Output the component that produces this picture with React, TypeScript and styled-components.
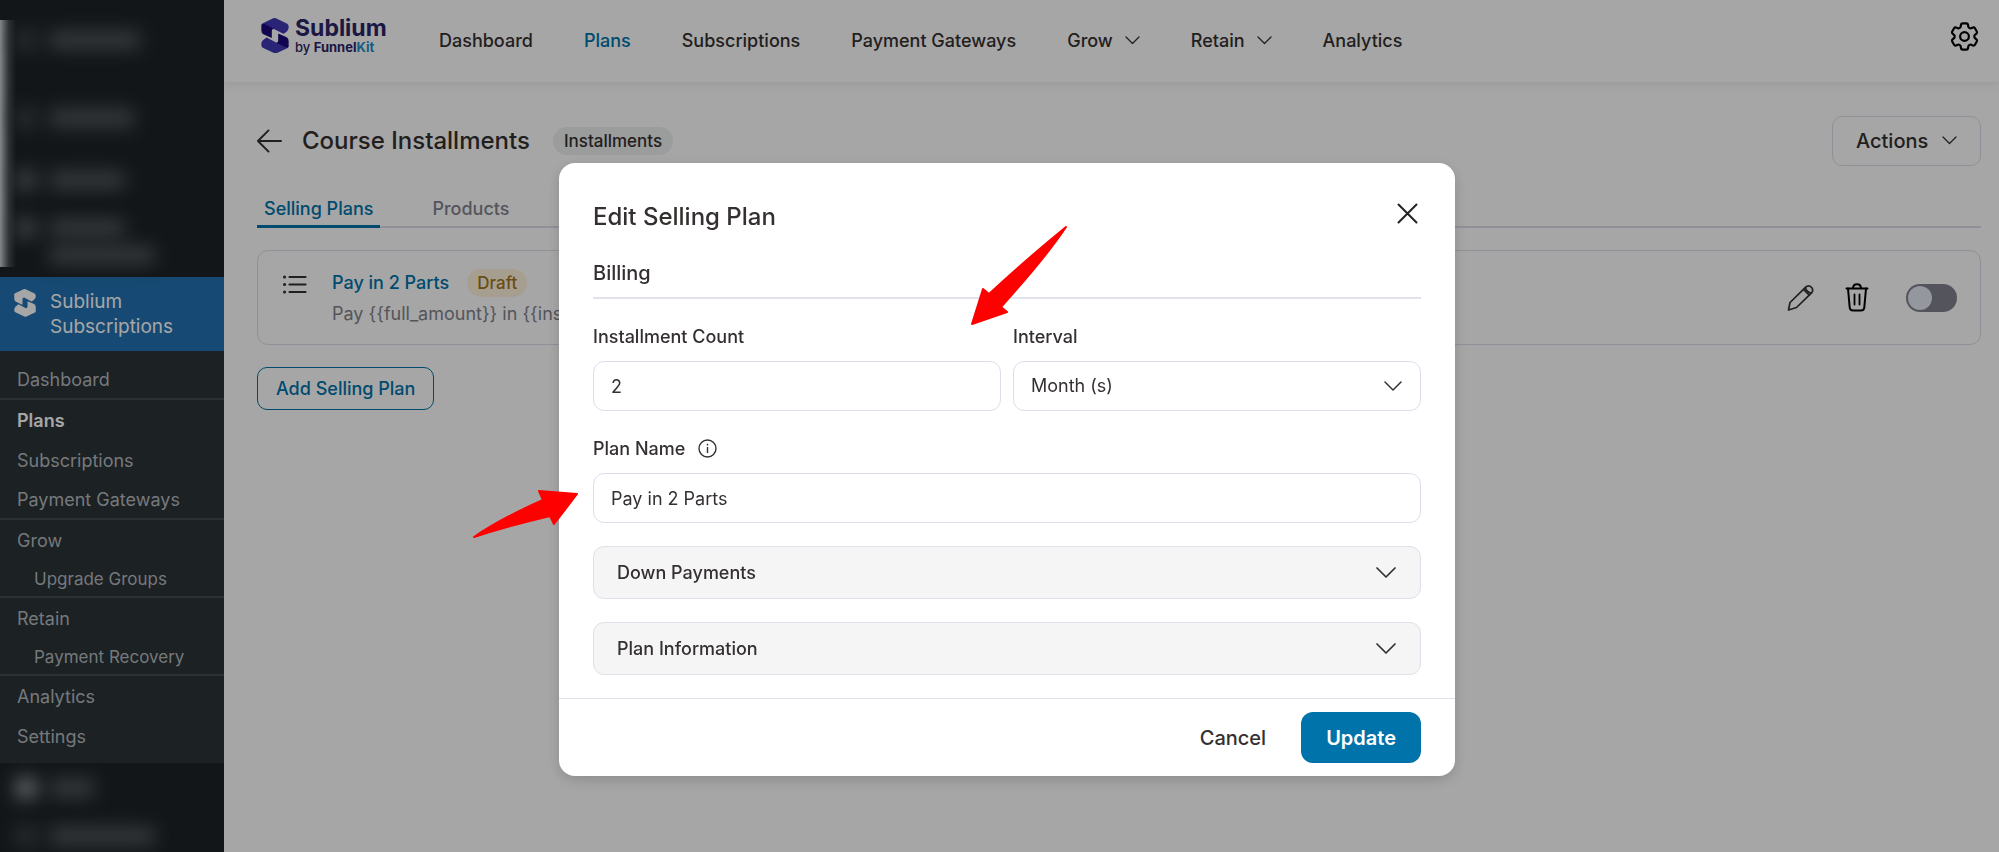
import React from "react";
import styled, { createGlobalStyle } from "styled-components";
import { HiOutlineCog6Tooth } from "react-icons/hi2";

const GlobalStyle = createGlobalStyle`
  *, *::before, *::after { box-sizing: border-box; }
  body {
    margin: 0;
    font-family: Inter, "Open Sans", sans-serif;
    font-size: 18px;
    line-height: 24px;
    color: #353030;
    background: #fff;
  }
  button, input, select { font: inherit; color: inherit; }
  button { cursor: pointer; }
  h1, h2, h3, p { margin: 0; }
  a { text-decoration: none; color: inherit; }
`;

/* ---------- page shell ---------- */

const Page = styled.div`
  display: flex;
  min-height: 100vh;
`;

const Sidebar = styled.aside`
  flex: 0 0 224px;
  background: #1d2327;
  overflow: hidden;
`;

const Main = styled.div`
  flex: 1;
  min-width: 0;
`;

/* ---------- sidebar ---------- */

const HiddenTop = styled.div`
  height: 277px;
  padding: 20px 0 10px;
`;

const HiddenTopInner = styled.div`
  height: 247px;
  padding-top: 11px;
  background: linear-gradient(to right, #c9d1d6 0, #8b9195 4px, #454b50 9px, #1d2327 16px);
`;

const HiddenRow = styled.div<{ $space: number }>`
  display: flex;
  align-items: center;
  gap: 14px;
  height: 18px;
  margin-bottom: ${(p) => p.$space}px;
  padding-left: 16px;
  filter: blur(9px);
`;

const HiddenIcon = styled.span<{ $tone?: string }>`
  width: 20px;
  height: 20px;
  background: ${(p) => p.$tone || "#40464a"};
`;

const HiddenText = styled.span<{ $width: number }>`
  width: ${(p) => p.$width}px;
  height: 18px;
  background: #53595d;
`;

const HiddenBottom = styled.div`
  padding-top: 16px;
`;

const ActiveMenu = styled.a`
  display: flex;
  gap: 14px;
  padding: 12px 14px 11px;
  height: 74px;
  background: #2271b1;
  color: #fff;
  font-size: 19px;
  line-height: 25px;
`;

const Submenu = styled.nav`
  display: flex;
  flex-direction: column;
  padding: 9px 0 7px;
  background: #2c3338;
`;

const MenuItem = styled.a<{ $child?: boolean; $current?: boolean; $divider?: boolean }>`
  display: flex;
  align-items: center;
  height: ${(p) => (p.$child ? 38 : 40)}px;
  padding-top: 1px;
  padding-left: ${(p) => (p.$child ? 34 : 17)}px;
  font-size: ${(p) => (p.$child ? 17 : 18)}px;
  font-weight: ${(p) => (p.$current ? 600 : 400)};
  color: ${(p) => (p.$current ? "#fff" : "#b4babf")};
  border-bottom: ${(p) => (p.$divider ? "2px solid #434a50" : "0")};
`;

/* ---------- header ---------- */

const Header = styled.header`
  display: flex;
  align-items: center;
  height: 83px;
  padding: 0 17px 1px 37px;
  border-bottom: 1px solid #f2f2f2;
  box-shadow: 0 3px 8px rgba(0, 0, 0, 0.06);
`;

const Brand = styled.a`
  display: flex;
  align-items: center;
  gap: 6px;
  width: 178px;
  padding-bottom: 10px;
`;

const BrandText = styled.span`
  display: flex;
  flex-direction: column;
  color: #2b2468;
`;

const BrandName = styled.strong`
  font-size: 23px;
  line-height: 23px;
  font-weight: 700;
`;

const BrandBy = styled.span`
  font-size: 13px;
  line-height: 14px;
  font-weight: 500;
  b { font-weight: 700; }
  em { font-style: normal; font-weight: 700; color: #1f8fd0; }
`;

const TopNav = styled.nav`
  display: flex;
  gap: 51px;
  flex: 1;
`;

const NavLink = styled.a<{ $active?: boolean }>`
  display: flex;
  align-items: center;
  gap: 12px;
  font-size: 18px;
  font-weight: 500;
  color: ${(p) => (p.$active ? "#0073aa" : "#353030")};
`;

const IconButton = styled.button`
  display: flex;
  padding: 0;
  border: 0;
  background: none;
`;

const GearButton = styled(IconButton)`
  margin-bottom: 9px;
  color: #000;
`;

/* ---------- content ---------- */

const Content = styled.main`
  padding: 33px 18px 0 33px;
`;

const TitleRow = styled.div`
  display: flex;
  align-items: center;
  height: 50px;
`;

const Title = styled.h1`
  margin: 0 23px 0 20px;
  font-size: 24px;
  line-height: 32px;
  font-weight: 500;
`;

const Tag = styled.span<{ $tone: "neutral" | "draft" }>`
  padding: ${(p) => (p.$tone === "draft" ? "2px 10px" : "2px 11px")};
  border-radius: 14px;
  font-size: 17px;
  line-height: 24px;
  font-weight: 500;
  color: ${(p) => (p.$tone === "draft" ? "#a37621" : "#353030")};
  background: ${(p) => (p.$tone === "draft" ? "#fff5dd" : "#edf1f0")};
`;

const ActionsButton = styled.button`
  display: flex;
  align-items: center;
  justify-content: space-between;
  width: 149px;
  height: 50px;
  margin-left: auto;
  padding: 0 23px;
  border: 1px solid #dedfea;
  border-radius: 10px;
  background: #fff;
  font-size: 20px;
  font-weight: 500;
`;

const Tabs = styled.div`
  display: flex;
  gap: 45px;
  margin-top: 28px;
  border-bottom: 2px solid #dedfea;
`;

const Tab = styled.button<{ $active?: boolean }>`
  height: 34px;
  margin-bottom: -2px;
  padding: 0 7px 1px;
  border: 0;
  border-bottom: 3px solid ${(p) => (p.$active ? "#0073aa" : "transparent")};
  background: none;
  font-size: 18px;
  font-weight: 500;
  color: ${(p) => (p.$active ? "#0073aa" : "#82838e")};
`;

const PlanCard = styled.section`
  display: flex;
  align-items: center;
  height: 95px;
  margin-top: 22px;
  padding: 0 23px 0 24px;
  border: 1px solid #dedfea;
  border-radius: 11px;
`;

const PlanList = styled.span`
  align-self: flex-start;
  padding-top: 24px;
  width: 50px;
`;

const PlanText = styled.div`
  flex: 1;
  font-size: 18px;
  color: #82838e;
`;

const PlanTitle = styled.div`
  display: flex;
  align-items: center;
  gap: 18px;
  margin-bottom: 5px;
  font-weight: 500;
  a { color: #0073aa; }
`;

const RowTools = styled.div`
  display: flex;
  align-items: center;
`;

const EditButton = styled(IconButton)`
  margin-right: 31px;
`;

const DeleteButton = styled(IconButton)`
  margin-right: 37px;
`;

const Switch = styled.input`
  appearance: none;
  width: 51px;
  height: 28px;
  margin: 0;
  padding: 2px;
  border-radius: 14px;
  background: #82838e;
  &::before {
    content: "";
    display: block;
    width: 24px;
    height: 24px;
    border-radius: 50%;
    background: #e3e8f2;
  }
`;

const AddButton = styled.button`
  height: 43px;
  margin-top: 22px;
  padding: 0 18px;
  border: 1px solid #0073aa;
  border-radius: 10px;
  background: #fff;
  font-size: 18px;
  font-weight: 500;
  color: #0073aa;
`;

/* ---------- dialog ---------- */

const Overlay = styled.div`
  position: fixed;
  inset: 0;
  display: flex;
  align-items: flex-start;
  justify-content: center;
  padding: 163px 0 0 15px;
  background: rgba(0, 0, 0, 0.35);
`;

const Dialog = styled.div`
  position: relative;
  width: 896px;
  border-radius: 16px;
  background: #fff;
  box-shadow: 0 4px 14px rgba(0, 0, 0, 0.16);
`;

const DialogBody = styled.div`
  padding: 34px 34px 23px;
`;

const DialogHead = styled.div`
  display: flex;
  align-items: flex-start;
  justify-content: space-between;
  h2 { font-size: 24px; line-height: 40px; font-weight: 500; }
`;

const CloseButton = styled(IconButton)`
  padding: 6px 3px;
`;

const SectionTitle = styled.h3`
  margin-top: 24px;
  padding-bottom: 12px;
  border-bottom: 2px solid #e2e2ef;
  font-size: 20px;
  line-height: 24px;
  font-weight: 500;
`;

const FieldGrid = styled.div`
  display: grid;
  grid-template-columns: 1fr 1fr;
  gap: 26px 12px;
  margin-top: 26px;
`;

const Field = styled.div<{ $wide?: boolean }>`
  grid-column: ${(p) => (p.$wide ? "1 / -1" : "auto")};
`;

const Label = styled.label`
  display: inline-block;
  margin-bottom: 12px;
  font-size: 18px;
  line-height: 24px;
  font-weight: 500;
  vertical-align: top;
`;

const InfoIcon = styled.svg`
  margin: 2px 0 0 13px;
`;

const TextInput = styled.input`
  display: block;
  width: 100%;
  height: 50px;
  padding: 0 17px;
  border: 1px solid #dddeec;
  border-radius: 11px;
  background: #fff;
  font-size: 18px;
`;

const SelectBox = styled.div`
  display: grid;
  align-items: center;
  > * { grid-area: 1 / 1; }
  svg { justify-self: end; margin-right: 19px; pointer-events: none; }
`;

const Select = styled(TextInput).attrs({ as: "select" })`
  appearance: none;
`;

const Accordion = styled.button`
  display: flex;
  align-items: center;
  justify-content: space-between;
  width: 100%;
  height: 53px;
  margin-top: 23px;
  padding: 0 24px 0 23px;
  border: 1px solid #dfdfea;
  border-radius: 11px;
  background: #f5f5f5;
  font-size: 18px;
  font-weight: 500;
`;

const DialogFoot = styled.div`
  display: flex;
  justify-content: flex-end;
  gap: 10px;
  padding: 13px 34px;
  border-top: 1px solid #dfdfea;
`;

const FootButton = styled.button<{ $primary?: boolean }>`
  height: 51px;
  padding: 0 25px;
  border: 0;
  border-radius: 12px;
  font-size: 20px;
  font-weight: ${(p) => (p.$primary ? 600 : 500)};
  color: ${(p) => (p.$primary ? "#fff" : "#353030")};
  background: ${(p) => (p.$primary ? "#0073aa" : "#fff")};
`;

const Pointer = styled.svg<{ $left: number; $top: number }>`
  position: absolute;
  left: ${(p) => p.$left}px;
  top: ${(p) => p.$top}px;
  fill: #ff0000;
  stroke: #ff0000;
  stroke-width: 2;
  stroke-linejoin: round;
  pointer-events: none;
`;

/* ---------- icons ---------- */

const Chevron = ({ width, thickness = 1.3 }: { width: number; thickness?: number }) => (
  <svg width={width} height={width / 2 + 2} viewBox={`0 0 ${width} ${width / 2 + 2}`} fill="none" stroke="#353030" strokeWidth={thickness} strokeLinecap="round" strokeLinejoin="round" aria-hidden="true">
    <path d={`M1 1 L${width / 2} ${width / 2} L${width - 1} 1`} />
  </svg>
);

const LogoHalf = ({ light, dark }: { light: string; dark: string }) => (
  <>
    <path d="M1 21 Q1 18 4 16 L36 1 Q40 -1 44 1 L78 17 Q82 20 82 25 V30 Q81 38 70 45 L66 47 L40 33 Q36 31 32 35 L8 27 Z" fill={light} />
    <path d="M1 22 Q3 16 10 18 L36 31 Q32 33 32 39 V59 L7 48 Q1 44 1 37 Z" fill={dark} />
  </>
);

const Logo = ({ width, light, dark }: { width: number; light: string; dark: string }) => (
  <svg width={width} height={(width * 105) / 83} viewBox="0 0 83 105" aria-hidden="true">
    <LogoHalf light={light} dark={dark} />
    <g transform="rotate(180 41.5 52.5)">
      <LogoHalf light={light} dark={dark} />
    </g>
  </svg>
);

const BackIcon = () => (
  <svg width="25" height="24" viewBox="0 0 26 24" fill="none" stroke="#353030" strokeWidth="2" strokeLinecap="round" strokeLinejoin="round" aria-hidden="true">
    <path d="M12 1 L1 12 L12 23 M1 12 H25" />
  </svg>
);

const ListIcon = () => (
  <svg width="26" height="20" viewBox="0 0 26 20" fill="none" stroke="#353030" strokeWidth="2.2" strokeLinecap="round" aria-hidden="true">
    <path d="M7.500 2 H23.500 M7.500 9.500 H23.500 M7.500 17 H23.500" />
    <path d="M2.500 2 h0.100 M2.500 9.500 h0.100 M2.500 17 h0.100" strokeWidth="3" />
  </svg>
);

const PencilIcon = () => (
  <svg width="27" height="28" viewBox="0 0 27 28" fill="none" stroke="#353030" strokeWidth="1.7" strokeLinecap="round" strokeLinejoin="round" aria-hidden="true">
    <path d="M1.500 26 L3 18.500 L18.500 3.300 Q21.500 0.500 24.500 3.300 Q27 6.300 24.300 9.200 L9.500 23.500 Z" />
    <path d="M16.500 5.300 L22.300 11.200" />
    <path d="M18.500 3.300 Q19 7.500 24.300 9.200" />
  </svg>
);

const TrashIcon = () => (
  <svg width="24" height="29" viewBox="0 0 24 29" fill="none" stroke="#000" strokeWidth="2" strokeLinecap="round" strokeLinejoin="round" aria-hidden="true">
    <path d="M1.500 5.500 H22.500 M8 5.500 Q8 1.300 12 1.300 Q16 1.300 16 5.500" />
    <path d="M3 5.500 L4.700 24.500 Q5 27.500 8 27.500 H16 Q19 27.500 19.300 24.500 L21 5.500" />
    <path d="M9.500 11.500 V21.500 M14.500 11.500 V21.500" strokeWidth="1.800" />
  </svg>
);

const CloseIcon = () => (
  <svg width="21" height="21" viewBox="0 0 21 21" fill="none" stroke="#222" strokeWidth="2" strokeLinecap="round" aria-hidden="true">
    <path d="M1.500 1.500 L19.500 19.500 M19.500 1.500 L1.500 19.500" />
  </svg>
);

/* ---------- data ---------- */

const menu = [
  { text: "Dashboard", divider: true },
  { text: "Plans", current: true },
  { text: "Subscriptions" },
  { text: "Payment Gateways", divider: true },
  { text: "Grow" },
  { text: "Upgrade Groups", child: true, divider: true },
  { text: "Retain" },
  { text: "Payment Recovery", child: true, divider: true },
  { text: "Analytics" },
  { text: "Settings" },
];

const topLinks = [
  { text: "Dashboard" },
  { text: "Plans", active: true },
  { text: "Subscriptions" },
  { text: "Payment Gateways" },
  { text: "Grow", more: true },
  { text: "Retain", more: true },
  { text: "Analytics" },
];

export default function App() {
  return (
    <>
      <GlobalStyle />
      <Page>
        <Sidebar>
          <HiddenTop>
            <HiddenTopInner>
              <HiddenRow $space={60}><HiddenIcon /><HiddenText $width={90} /></HiddenRow>
              <HiddenRow $space={44}><HiddenIcon /><HiddenText $width={84} /></HiddenRow>
              <HiddenRow $space={30}><HiddenIcon $tone="#5b6165" /><HiddenText $width={74} /></HiddenRow>
              <HiddenRow $space={9}><HiddenIcon $tone="#5b6165" /><HiddenText $width={74} /></HiddenRow>
              <HiddenRow $space={0}><HiddenIcon $tone="transparent" /><HiddenText $width={104} /></HiddenRow>
            </HiddenTopInner>
          </HiddenTop>
          <ActiveMenu href="#sublium">
            <Logo width={22} light="#fff" dark="#fff" />
            <span>Sublium<br />Subscriptions</span>
          </ActiveMenu>
          <Submenu>
            {menu.map((m) => (
              <MenuItem key={m.text} href="#menu" $child={m.child} $current={m.current} $divider={m.divider}>
                {m.text}
              </MenuItem>
            ))}
          </Submenu>
          <HiddenBottom>
            <HiddenRow $space={30}><HiddenIcon $tone="#9aa0a5" /><HiddenText $width={44} /></HiddenRow>
            <HiddenRow $space={0}><HiddenIcon /><HiddenText $width={104} /></HiddenRow>
          </HiddenBottom>
        </Sidebar>

        <Main>
          <Header>
            <Brand href="#home">
              <Logo width={28} light="#4038b5" dark="#1a0878" />
              <BrandText>
                <BrandName>Sublium</BrandName>
                <BrandBy>by <b>Funnel</b><em>Kit</em></BrandBy>
              </BrandText>
            </Brand>
            <TopNav>
              {topLinks.map((l) => (
                <NavLink key={l.text} href="#nav" $active={l.active}>
                  {l.text}
                  {l.more && <Chevron width={15} />}
                </NavLink>
              ))}
            </TopNav>
            <GearButton aria-label="Settings"><HiOutlineCog6Tooth size={35} /></GearButton>
          </Header>

          <Content>
            <TitleRow>
              <IconButton aria-label="Back"><BackIcon /></IconButton>
              <Title>Course Installments</Title>
              <Tag $tone="neutral">Installments</Tag>
              <ActionsButton>Actions <Chevron width={15} /></ActionsButton>
            </TitleRow>
            <Tabs role="tablist">
              <Tab role="tab" aria-selected="true" $active>Selling Plans</Tab>
              <Tab role="tab" aria-selected="false">Products</Tab>
            </Tabs>
            <PlanCard>
              <PlanList><ListIcon /></PlanList>
              <PlanText>
                <PlanTitle>
                  <a href="#plan">Pay in 2 Parts</a>
                  <Tag $tone="draft">Draft</Tag>
                </PlanTitle>
                <p>Pay {"{{full_amount}}"} in {"{{inst"}</p>
              </PlanText>
              <RowTools>
                <EditButton aria-label="Edit"><PencilIcon /></EditButton>
                <DeleteButton aria-label="Delete"><TrashIcon /></DeleteButton>
                <Switch type="checkbox" role="switch" aria-label="Enable plan" />
              </RowTools>
            </PlanCard>
            <AddButton>Add Selling Plan</AddButton>
          </Content>
        </Main>
      </Page>

      <Overlay>
        <Dialog role="dialog" aria-modal="true" aria-labelledby="dialog-title">
          <DialogBody>
            <DialogHead>
              <h2 id="dialog-title">Edit Selling Plan</h2>
              <CloseButton aria-label="Close"><CloseIcon /></CloseButton>
            </DialogHead>
            <SectionTitle>Billing</SectionTitle>
            <FieldGrid>
              <Field>
                <Label htmlFor="count">Installment Count</Label>
                <TextInput id="count" defaultValue="2" />
              </Field>
              <Field>
                <Label htmlFor="interval">Interval</Label>
                <SelectBox>
                  <Select id="interval">
                    <option>Month (s)</option>
                  </Select>
                  <Chevron width={18} thickness={1.5} />
                </SelectBox>
              </Field>
              <Field $wide>
                <Label htmlFor="name">Plan Name</Label>
                <InfoIcon width="19" height="19" viewBox="0 0 19 19" fill="none" stroke="#353030" strokeWidth="1.4" aria-hidden="true">
                  <circle cx="9.500" cy="9.500" r="8.500" />
                  <path d="M9.500 8 V14 M9.500 4.800 V6.400" />
                </InfoIcon>
                <TextInput id="name" defaultValue="Pay in 2 Parts" />
              </Field>
            </FieldGrid>
            <Accordion aria-expanded="false">Down Payments <Chevron width={20} thickness={1.7} /></Accordion>
            <Accordion aria-expanded="false">Plan Information <Chevron width={20} thickness={1.7} /></Accordion>
          </DialogBody>
          <DialogFoot>
            <FootButton>Cancel</FootButton>
            <FootButton $primary>Update</FootButton>
          </DialogFoot>
          <Pointer $left={411} $top={62} width="100" height="104" viewBox="0 0 100 104" aria-hidden="true">
            <path d="M2 99 L13 64 L19 69 Q58 33 96 2 Q76 32 31 82 L37 87 Z" />
          </Pointer>
          <Pointer $left={-87} $top={325} width="110" height="54" viewBox="0 0 110 54" aria-hidden="true">
            <path d="M105 6 L67 3 L71 12 Q30 30 2 49 Q36 38 78 28 L82 36 Z" />
          </Pointer>
        </Dialog>
      </Overlay>
    </>
  );
}
